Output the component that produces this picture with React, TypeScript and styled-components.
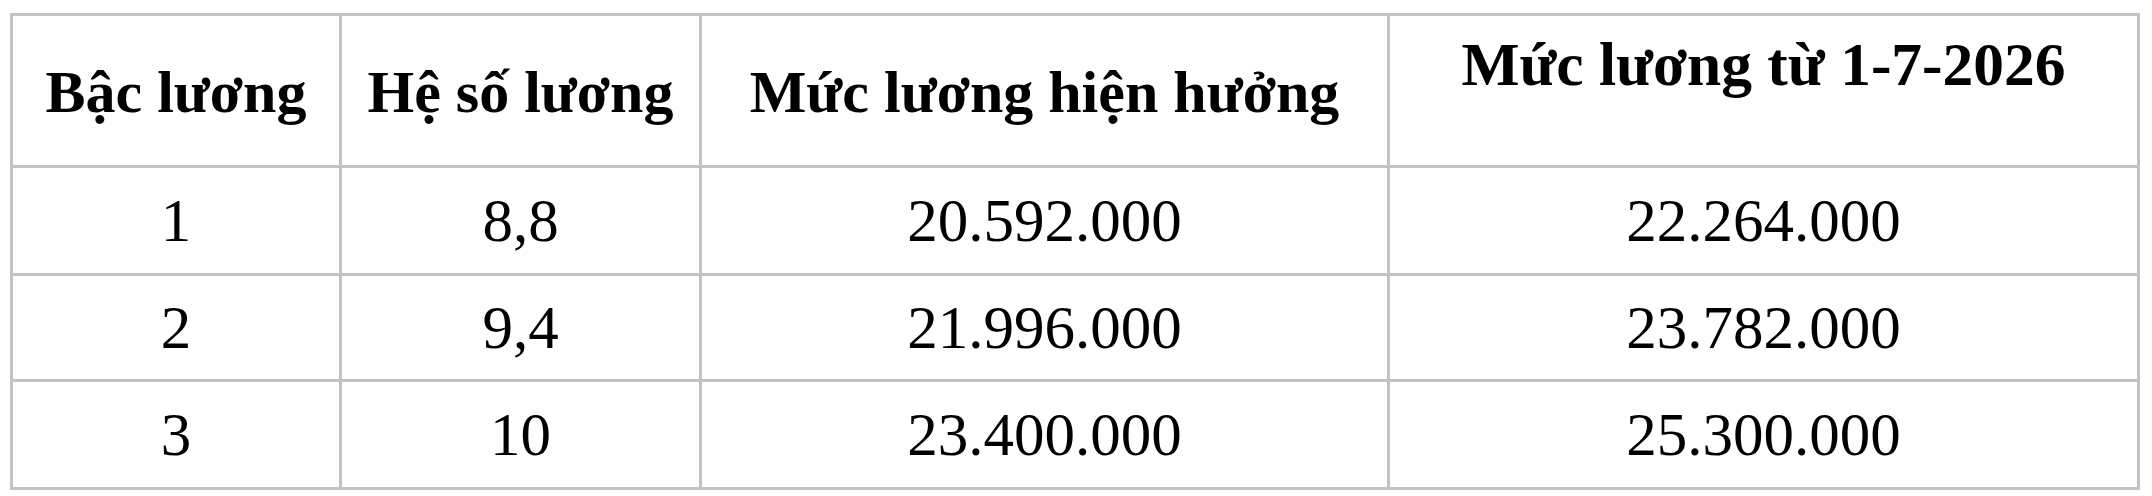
import React from "react";
import styled, { createGlobalStyle } from "styled-components";

const GlobalStyle = createGlobalStyle`
  html, body {
    margin: 0;
    padding: 0;
    background: #ffffff;
  }
  body {
    font-family: "Liberation Serif", "Times New Roman", serif;
    color: #000000;
  }
`;

const Page = styled.div`
  padding: 13px 0 0 10px;
`;

const Table = styled.div`
  display: grid;
  grid-template-columns: 326px 357px 685px 747px;
  grid-template-rows: 149px 105px 103px 105px;
  gap: 3px;
  padding: 3px;
  width: max-content;
  background: #c3c3c3;
`;

const HeaderCell = styled.div<{ $top?: boolean; $size?: number }>`
  background: #ffffff;
  display: flex;
  justify-content: center;
  align-items: ${(p) => (p.$top ? "flex-start" : "center")};
  padding-top: ${(p) => (p.$top ? "13px" : "3px")};
  box-sizing: border-box;
  font-weight: 700;
  font-size: ${(p) => p.$size ?? 60}px;
  line-height: 1.15;
  white-space: nowrap;
`;

const Cell = styled.div`
  background: #ffffff;
  display: flex;
  justify-content: center;
  align-items: center;
  padding-top: 1px;
  box-sizing: border-box;
  font-weight: 400;
  font-size: 61px;
  line-height: 1.15;
  white-space: nowrap;
`;

const rows = [
  ["1", "8,8", "20.592.000", "22.264.000"],
  ["2", "9,4", "21.996.000", "23.782.000"],
  ["3", "10", "23.400.000", "25.300.000"],
];

export default function App() {
  return (
    <>
      <GlobalStyle />
      <Page>
        <Table>
          <HeaderCell>Bậc lương</HeaderCell>
          <HeaderCell>Hệ số lương</HeaderCell>
          <HeaderCell>Mức lương hiện hưởng</HeaderCell>
          <HeaderCell $top $size={61.5}>
            Mức lương từ 1-7-2026
          </HeaderCell>
          {rows.map((r) =>
            r.map((v, i) => <Cell key={r[0] + "-" + i}>{v}</Cell>)
          )}
        </Table>
      </Page>
    </>
  );
}
